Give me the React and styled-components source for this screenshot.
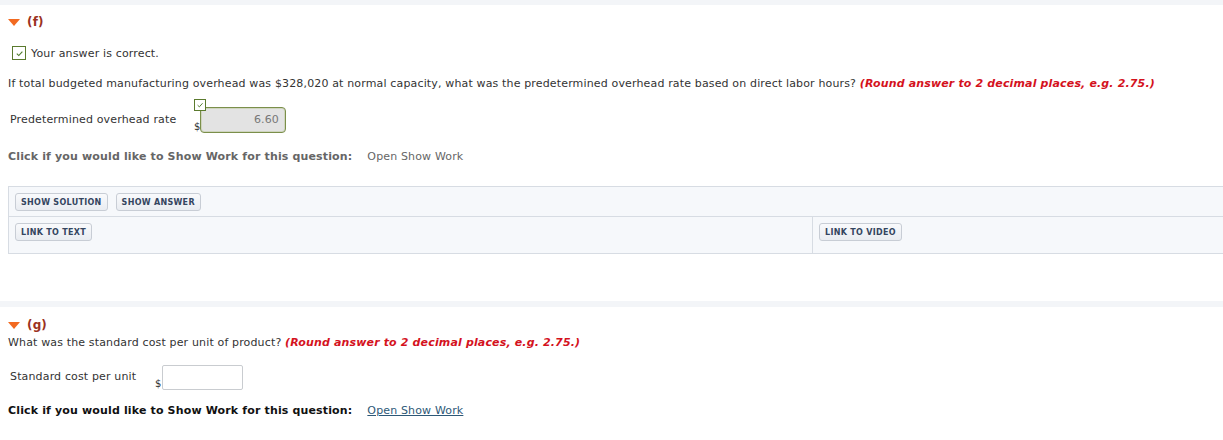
import styled, { createGlobalStyle } from "styled-components";

const Global = createGlobalStyle`
  body {
    margin: 0;
    background: #fff;
    font-family: "DejaVu Sans", Verdana, sans-serif;
    font-size: 11px;
    letter-spacing: 0.15px;
    color: #333;
    overflow: hidden;
  }
`;

const Band = styled.div`
  height: ${(p) => p.h || 5}px;
  background: #f3f5f8;
  margin-top: ${(p) => p.top || 0}px;
`;

const Section = styled.div`
  padding-left: 8px;
`;

const Header = styled.div`
  display: flex;
  align-items: center;
  gap: 7px;
  height: 14px;
  margin-top: ${(p) => p.top}px;
  font-size: 12px;
  font-weight: bold;
  color: #9b3222;
`;

const Triangle = styled.span`
  width: 0;
  height: 0;
  border-left: 6px solid transparent;
  border-right: 6px solid transparent;
  border-top: 7px solid #f26a21;
`;

const Correct = styled.div`
  display: flex;
  align-items: center;
  gap: 5px;
  margin-top: 17px;
  margin-left: 4px;
  height: 14px;
`;

const CheckBox = styled.span`
  box-sizing: border-box;
  width: ${(p) => p.size}px;
  height: ${(p) => p.size}px;
  border: 1px solid #5b7a2e;
  background: #fff;
  display: inline-flex;
  align-items: center;
  justify-content: center;
`;

const Question = styled.div`
  line-height: 14px;
  margin-top: ${(p) => p.top}px;
  color: #333;
`;

const Hint = styled.span`
  color: #d4121d;
  font-weight: bold;
  font-style: italic;
`;

const FieldRow = styled.div`
  display: flex;
  align-items: flex-end;
  margin-top: ${(p) => p.top}px;
`;

const Label = styled.div`
  width: ${(p) => p.w}px;
  padding-left: 2px;
  align-self: center;
  margin-top: ${(p) => p.shift || 0}px;
`;

const Answer = styled.div`
  position: relative;
  display: flex;
  align-items: flex-end;
  padding-top: ${(p) => p.pad || 0}px;
`;

const Dollar = styled.span`
  font-size: 10px;
  line-height: 10px;
  width: ${(p) => p.w}px;
  margin-bottom: 1px;
`;

const Input = styled.div`
  box-sizing: border-box;
  width: ${(p) => p.w}px;
  height: ${(p) => p.h}px;
  border: 1px solid ${(p) => (p.done ? "#7b8f4a" : "#c9ccd0")};
  border-radius: ${(p) => (p.done ? 4 : 2)}px;
  background: ${(p) => (p.done ? "#e3e3e3" : "#fff")};
  box-shadow: ${(p) => (p.done ? "inset 0 0 0 1px #cfd5bf" : "none")};
  color: #777;
  text-align: right;
  padding-right: 6px;
  line-height: ${(p) => p.h - 2}px;
`;

const Badge = styled(CheckBox)`
  position: absolute;
  top: 0;
  left: 0;
  background: #fff;
`;

const ShowWork = styled.div`
  display: flex;
  gap: 15px;
  line-height: 14px;
  margin-top: ${(p) => p.top}px;
  color: ${(p) => (p.muted ? "#666" : "#111")};
`;

const WorkLabel = styled.span`
  font-weight: bold;
`;

const WorkLink = styled.span`
  color: ${(p) => (p.muted ? "#666" : "#2d5877")};
  text-decoration: ${(p) => (p.muted ? "none" : "underline")};
`;

const Panel = styled.div`
  margin-top: 22px;
  margin-right: -10px;
  border: 1px solid #d7dce3;
  background: #f6f8fb;
`;

const PanelRow = styled.div`
  display: grid;
  grid-template-columns: ${(p) => p.cols || "1fr"};
  height: ${(p) => p.h}px;
  border-top: ${(p) => (p.divided ? "1px solid #d7dce3" : "none")};
`;

const Cell = styled.div`
  display: flex;
  gap: 8px;
  padding: 6px 6px 0;
  border-left: ${(p) => (p.line ? "1px solid #d7dce3" : "none")};
`;

const Btn = styled.button`
  box-sizing: border-box;
  height: 18px;
  padding: 0 5px;
  border: 1px solid #c8cdd5;
  border-radius: 3px;
  background: linear-gradient(#f9fafc, #e9ecf1);
  font-family: "DejaVu Sans", Verdana, sans-serif;
  font-size: 8px;
  font-weight: bold;
  letter-spacing: 0.3px;
  color: #34455f;
  cursor: pointer;
`;

const Tick = ({ s = 9 }) => (
  <svg width={s} height={s} viewBox="0 0 10 10">
    <path d="M2 5.2 L4.2 7.3 L8.2 2.8" fill="none" stroke="#4d7a2a" strokeWidth="1.2" />
  </svg>
);

export default function App() {
  return (
    <>
      <Global />
      <Band />
      <Section>
        <Header top={10}>
          <Triangle />
          (f)
        </Header>
        <Correct>
          <CheckBox size={14}>
            <Tick />
          </CheckBox>
          Your answer is correct.
        </Correct>
        <Question top={17}>
          If total budgeted manufacturing overhead was $328,020 at normal capacity, what was the
          predetermined overhead rate based on direct labor hours?{" "}
          <Hint>(Round answer to 2 decimal places, e.g. 2.75.)</Hint>
        </Question>
        <FieldRow top={8}>
          <Label w={184} shift={6}>Predetermined overhead rate</Label>
          <Answer pad={8}>
            <Badge size={12}>
              <Tick s={8} />
            </Badge>
            <Dollar w={6}>$</Dollar>
            <Input done w={86} h={26}>6.60</Input>
          </Answer>
        </FieldRow>
        <ShowWork muted top={17}>
          <WorkLabel>Click if you would like to Show Work for this question:</WorkLabel>
          <WorkLink muted>Open Show Work</WorkLink>
        </ShowWork>
        <Panel>
          <PanelRow h={29}>
            <Cell>
              <Btn>SHOW SOLUTION</Btn>
              <Btn>SHOW ANSWER</Btn>
            </Cell>
          </PanelRow>
          <PanelRow divided h={36} cols="803px 1fr">
            <Cell>
              <Btn>LINK TO TEXT</Btn>
            </Cell>
            <Cell line>
              <Btn>LINK TO VIDEO</Btn>
            </Cell>
          </PanelRow>
        </Panel>
      </Section>
      <Band top={47} h={6} />
      <Section>
        <Header top={11}>
          <Triangle />
          (g)
        </Header>
        <Question top={4}>
          What was the standard cost per unit of product?{" "}
          <Hint>(Round answer to 2 decimal places, e.g. 2.75.)</Hint>
        </Question>
        <FieldRow top={15}>
          <Label w={145} shift={-2}>Standard cost per unit</Label>
          <Answer>
            <Dollar w={7}>$</Dollar>
            <Input w={81} h={25} />
          </Answer>
        </FieldRow>
        <ShowWork top={14}>
          <WorkLabel>Click if you would like to Show Work for this question:</WorkLabel>
          <WorkLink>Open Show Work</WorkLink>
        </ShowWork>
      </Section>
    </>
  );
}
